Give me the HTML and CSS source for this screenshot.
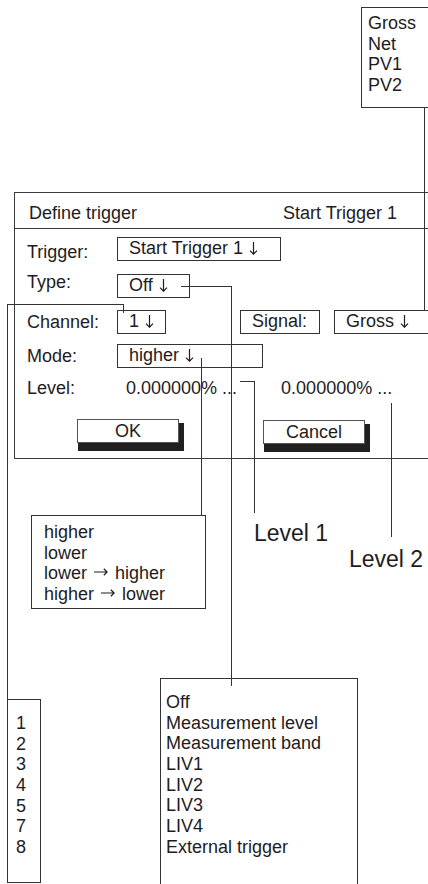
FILE: index.html
```html
<!DOCTYPE html>
<html lang="en">
<head>
  <meta charset="UTF-8" />
  <meta name="viewport" content="width=device-width, initial-scale=1" />
  <title>Define trigger</title>
  <link rel="stylesheet" href="styles.css">
</head>
<body>
  <div class="sheet">

    <section class="dialog">
      <header class="dialog-head">
        <span>Define trigger</span>
        <span>Start Trigger 1</span>
      </header>

      <div class="dialog-body">
        <div class="row row-trigger">
          <span class="label label-trigger">Trigger:</span>
          <span class="field field-trigger">Start Trigger 1 <svg class="arrow-down" viewBox="0 0 9 13"><path d="M4.5 0 V12.2 M1 8.6 L4.5 12.2 L8 8.6" /></svg></span>
        </div>

        <div class="row row-type">
          <span class="label label-type">Type:</span>
          <span class="field field-type">Off <svg class="arrow-down" viewBox="0 0 9 13"><path d="M4.5 0 V12.2 M1 8.6 L4.5 12.2 L8 8.6" /></svg></span>
        </div>

        <div class="row row-channel">
          <span class="label">Channel:</span>
          <span class="field field-channel">1 <svg class="arrow-down" viewBox="0 0 9 13"><path d="M4.5 0 V12.2 M1 8.6 L4.5 12.2 L8 8.6" /></svg></span>
          <span class="field field-signal">Signal:</span>
          <span class="field field-gross">Gross <svg class="arrow-down" viewBox="0 0 9 13"><path d="M4.5 0 V12.2 M1 8.6 L4.5 12.2 L8 8.6" /></svg></span>
        </div>

        <div class="row row-mode">
          <span class="label">Mode:</span>
          <span class="field field-mode">higher <svg class="arrow-down" viewBox="0 0 9 13"><path d="M4.5 0 V12.2 M1 8.6 L4.5 12.2 L8 8.6" /></svg></span>
        </div>

        <div class="row row-level">
          <span class="label">Level:</span>
          <span class="value value-1">0.000000% ...</span>
          <span class="value value-2">0.000000% ...</span>
        </div>

        <div class="row row-actions">
          <button class="btn btn-ok">OK</button>
          <button class="btn btn-cancel">Cancel</button>
        </div>
      </div>
    </section>

    <!-- aufklappbare Listen als Legende -->
    <ul class="callout callout-signal">
      <li>Gross</li>
      <li>Net</li>
      <li>PV1</li>
      <li>PV2</li>
    </ul>

    <ul class="callout callout-mode">
      <li>higher</li>
      <li>lower</li>
      <li>lower <svg class="arrow-right" viewBox="0 0 14 8"><path d="M0 4 H13.2 M9.8 0.8 L13.2 4 L9.8 7.2" /></svg> higher</li>
      <li>higher <svg class="arrow-right" viewBox="0 0 14 8"><path d="M0 4 H13.2 M9.8 0.8 L13.2 4 L9.8 7.2" /></svg> lower</li>
    </ul>

    <ul class="callout callout-channel">
      <li>1</li>
      <li>2</li>
      <li>3</li>
      <li>4</li>
      <li>5</li>
      <li>7</li>
      <li>8</li>
    </ul>

    <ul class="callout callout-type">
      <li>Off</li>
      <li>Measurement level</li>
      <li>Measurement band</li>
      <li>LIV1</li>
      <li>LIV2</li>
      <li>LIV3</li>
      <li>LIV4</li>
      <li>External trigger</li>
    </ul>

    <span class="tag tag-level1">Level 1</span>
    <span class="tag tag-level2">Level 2</span>

    <!-- Verbindungslinien -->
    <svg class="wires" width="428" height="884" viewBox="0 0 428 884">
      <path d="M424.5 107 V310" />
      <path d="M181 286.5 H231.5 V686" />
      <path d="M123.5 313 V304.5 H7.5 V699" />
      <path d="M201.5 358 V515" />
      <path d="M240 381.5 H254.5 V513" />
      <path d="M391.5 403 V537" />
    </svg>
  </div>
</body>
</html>
```

FILE: styles.css
```css
* {
  box-sizing: border-box;
}

body {
  margin: 0;
  font-family: "Liberation Sans", Arial, sans-serif;
  font-size: 18px;
  line-height: 1.15;
  color: #1e1c1d;
  background: #fff;
  overflow: hidden;
}

.sheet {
  position: relative;
  width: 428px;
  height: 884px;
  padding-top: 192px;
  overflow: hidden;
}

/* Dialog */

.dialog {
  width: 430px;
  margin-left: 14px;
  border: 1px solid #3a3a3a;
  border-right: none;
}

.dialog-head {
  display: flex;
  justify-content: space-between;
  height: 36px;
  padding: 10px 47px 0 14px;
  border-bottom: 1px solid #3a3a3a;
}

.dialog-body {
  padding: 8px 0 15px 12px;
}

.row {
  display: flex;
  align-items: center;
  height: 24px;
}

.row > * {
  flex-shrink: 0;
}

.row-type {
  margin-top: 13px;
}

.row-channel {
  margin-top: 12px;
}

.row-mode {
  margin-top: 10px;
}

.row-level {
  margin-top: 8px;
}

.row-actions {
  margin-top: 19px;
  align-items: flex-start;
}

.label {
  width: 90px;
}

.label-trigger {
  padding-top: 6px;
}

.label-type {
  padding-bottom: 8px;
}

.field {
  height: 24px;
  line-height: 21px;
  padding-left: 11px;
  border: 1px solid #333;
  white-space: nowrap;
}

.field-trigger {
  width: 164px;
}

.field-type {
  width: 73px;
}

.field-channel {
  width: 49px;
}

.field-signal {
  width: 80px;
  margin-left: 74px;
}

.field-gross {
  width: 120px;
  margin-left: 14px;
}

.field-mode {
  width: 146px;
}

.arrow-down,
.arrow-right {
  fill: none;
  stroke: currentColor;
  stroke-width: 1.2;
}

.arrow-down {
  width: 9px;
  height: 13px;
  margin-left: 1px;
  vertical-align: -1px;
}

.arrow-right {
  width: 14px;
  height: 8px;
  margin: 0 2px;
  vertical-align: 3px;
}

.value {
  white-space: nowrap;
}

.value-1 {
  margin-left: 9px;
}

.value-2 {
  margin-left: 44px;
}

.btn {
  width: 102px;
  height: 24px;
  padding: 0;
  font: inherit;
  line-height: 20px;
  color: inherit;
  background: #fff;
  border: 1px solid #555;
  box-shadow: 3px 6px 0 2px #231f20;
}

.btn-ok {
  margin-left: 50px;
}

.btn-cancel {
  margin-left: 84px;
  margin-top: 1px;
}

/* Legenden-Kaesten */

.callout {
  position: absolute;
  margin: 0;
  list-style: none;
  border: 1px solid #333;
  background: #fff;
  white-space: nowrap;
}

.callout-signal {
  left: 361px;
  top: 7px;
  width: 80px;
  height: 101px;
  padding: 5px 0 0 6px;
}

.callout-mode {
  left: 31px;
  top: 515px;
  width: 175px;
  height: 94px;
  padding: 6px 0 0 12px;
}

.callout-channel {
  left: 7px;
  top: 699px;
  width: 34px;
  height: 184px;
  padding: 13px 0 0 8px;
}

.callout-type {
  left: 160px;
  top: 678px;
  width: 198px;
  height: 230px;
  padding: 13px 0 0 5px;
}

.tag {
  position: absolute;
  font-size: 23px;
  white-space: nowrap;
}

.tag-level1 {
  left: 254px;
  top: 520px;
}

.tag-level2 {
  left: 349px;
  top: 546px;
}

.wires {
  position: absolute;
  left: 0;
  top: 0;
  pointer-events: none;
  fill: none;
  stroke: #333;
  stroke-width: 1;
  shape-rendering: crispEdges;
}
```
